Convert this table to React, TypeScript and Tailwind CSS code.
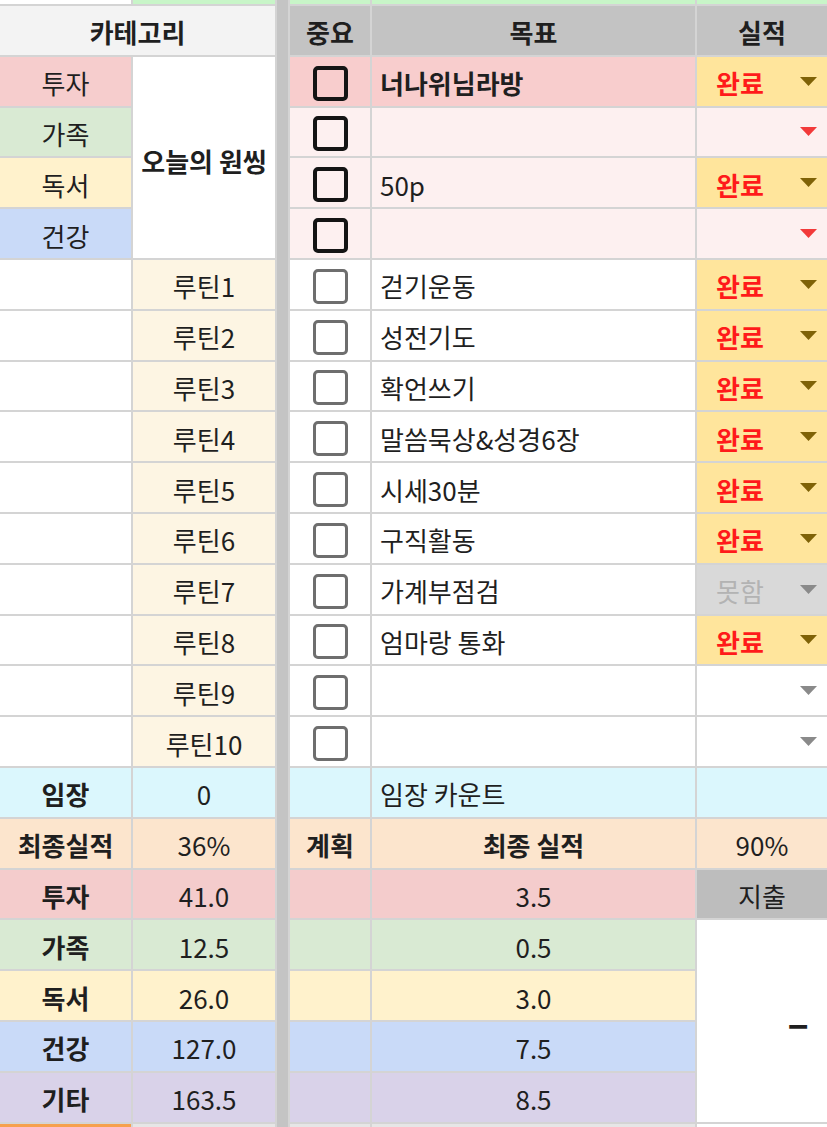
import { FC, ReactNode } from "react";
import clsx from "clsx";
import { twMerge } from "tailwind-merge";

type Status = "done" | "fail" | "empty";

interface CellProps {
  className?: string;
  children?: ReactNode;
}

// one spreadsheet cell; text sits a little below the middle like in Sheets
const Cell: FC<CellProps> = ({ className, children }) => (
  <div
    className={twMerge(
      "flex items-center justify-center pt-2 text-[26px] leading-none text-[#1f1f1f]",
      className
    )}
  >
    {children}
  </div>
);

const Arrow: FC<{ color: string }> = ({ color }) => (
  <svg width="17" height="9" viewBox="0 0 17 9" className="mb-2 shrink-0">
    <polygon points="0,0 17,0 8.5,9" fill={color} />
  </svg>
);

const Checkbox: FC<{ strong?: boolean }> = ({ strong }) => (
  <div
    className={clsx(
      "mt-1 h-[35px] w-[35px] rounded-[5px]",
      strong ? "border-[4px] border-[#141414]" : "border-[3px] border-[#6e6e6e] bg-white"
    )}
  />
);

const StatusCell: FC<{ status: Status; bg?: string; arrow?: string }> = ({ status, bg, arrow }) => {
  if (status === "done") {
    return (
      <Cell className="justify-between bg-[#ffe59c] pl-[19px] pr-[10px]">
        <span className="mb-1 font-bold text-[#ff1a1a]">완료</span>
        <Arrow color="#7f6207" />
      </Cell>
    );
  }
  if (status === "fail") {
    return (
      <Cell className="justify-between bg-[#d9d9d9] pl-[19px] pr-[10px]">
        <span className="mb-1 text-[#b3b3b3]">못함</span>
        <Arrow color="#8a8a8a" />
      </Cell>
    );
  }
  return (
    <Cell className={clsx("justify-end pr-[10px]", bg)}>
      <Arrow color={arrow ?? "#8a8a8a"} />
    </Cell>
  );
};

const oneThing = [
  { cat: "투자", catBg: "bg-[#f6cdcd]", rowBg: "bg-[#f8cdcd]", goal: "너나위님라방", bold: true, status: "done" as Status },
  { cat: "가족", catBg: "bg-[#d9ead3]", rowBg: "bg-[#fdf0f0]", goal: "", bold: false, status: "empty" as Status },
  { cat: "독서", catBg: "bg-[#fff2cc]", rowBg: "bg-[#fdf0f0]", goal: "50p", bold: false, status: "done" as Status },
  { cat: "건강", catBg: "bg-[#c9daf8]", rowBg: "bg-[#fdf0f0]", goal: "", bold: false, status: "empty" as Status },
];

const routines: { goal: string; status: Status }[] = [
  { goal: "걷기운동", status: "done" },
  { goal: "성전기도", status: "done" },
  { goal: "확언쓰기", status: "done" },
  { goal: "말씀묵상&성경6장", status: "done" },
  { goal: "시세30분", status: "done" },
  { goal: "구직활동", status: "done" },
  { goal: "가계부점검", status: "fail" },
  { goal: "엄마랑 통화", status: "done" },
  { goal: "", status: "empty" },
  { goal: "", status: "empty" },
];

const summary = [
  { cat: "투자", bg: "bg-[#f4cccc]", plan: "41.0", actual: "3.5" },
  { cat: "가족", bg: "bg-[#d9ead3]", plan: "12.5", actual: "0.5" },
  { cat: "독서", bg: "bg-[#fff2cc]", plan: "26.0", actual: "3.0" },
  { cat: "건강", bg: "bg-[#c9daf8]", plan: "127.0", actual: "7.5" },
  { cat: "기타", bg: "bg-[#d9d2e9]", plan: "163.5", actual: "8.5" },
];

const App: FC = () => {
  return (
    <div className="min-h-screen overflow-hidden bg-white font-['Noto_Sans_CJK_KR','Noto_Sans',sans-serif]">
      <div className="grid grid-cols-[131px_142px_11px_80px_323px_130px] grid-rows-[4px_repeat(22,48.8px)_3px] gap-[2px] bg-[#d4d4d4]">
        {/* divider column between the two blocks */}
        <div className="col-start-3 row-span-24 row-start-1 bg-[#c4c4c4]" />

        {/* top sliver of the previous row */}
        <div className="bg-white" />
        <div className="bg-[#c8f5c8]" />
        <div className="bg-[#c8f5c8]" />
        <div className="bg-[#c8f5c8]" />
        <div className="bg-[#c8f5c8]" />

        {/* header */}
        <Cell className="col-span-2 bg-[#f3f3f3] font-bold">
          <span className="mb-1">카테고리</span>
        </Cell>
        <Cell className="bg-[#c3c3c3] font-bold">
          <span className="mb-1">중요</span>
        </Cell>
        <Cell className="bg-[#c3c3c3] font-bold">
          <span className="mb-1">목표</span>
        </Cell>
        <Cell className="bg-[#c3c3c3] font-bold">
          <span className="mb-1">실적</span>
        </Cell>

        {/* one thing */}
        {oneThing.map((r, i) => (
          <div key={r.cat} className="contents">
            <Cell className={r.catBg}>
              <span className="mb-1">{r.cat}</span>
            </Cell>
            {i === 0 && <Cell className="row-span-4 bg-white font-bold">오늘의 원씽</Cell>}
            <Cell className={clsx(r.rowBg, "pt-0")}>
              <Checkbox strong />
            </Cell>
            <Cell className={clsx(r.rowBg, "justify-start pl-2", r.bold && "font-bold")}>
              <span className="mb-1">{r.goal}</span>
            </Cell>
            <StatusCell status={r.status} bg={r.rowBg} arrow="#f23a3a" />
          </div>
        ))}

        {/* routines */}
        {routines.map((r, i) => (
          <div key={i} className="contents">
            <Cell className="bg-white" />
            <Cell className="bg-[#fdf5e3]">
              <span className="mb-1">루틴{i + 1}</span>
            </Cell>
            <Cell className="bg-white pt-0">
              <Checkbox />
            </Cell>
            <Cell className="justify-start bg-white pl-2">
              <span className="mb-1">{r.goal}</span>
            </Cell>
            <StatusCell status={r.status} bg="bg-white" />
          </div>
        ))}

        {/* site visit counter */}
        <Cell className="bg-[#dbf7fd] font-bold">
          <span className="mb-1">임장</span>
        </Cell>
        <Cell className="bg-[#dbf7fd]">
          <span className="mb-1">0</span>
        </Cell>
        <Cell className="bg-[#dbf7fd]" />
        <Cell className="justify-start bg-[#dbf7fd] pl-2">
          <span className="mb-1">임장 카운트</span>
        </Cell>
        <Cell className="bg-[#dbf7fd]" />

        {/* totals */}
        <Cell className="bg-[#fce5cd] font-bold">
          <span className="mb-1">최종실적</span>
        </Cell>
        <Cell className="bg-[#fce5cd]">
          <span className="mb-1">36%</span>
        </Cell>
        <Cell className="bg-[#fce5cd] font-bold">
          <span className="mb-1">계획</span>
        </Cell>
        <Cell className="bg-[#fce5cd] font-bold">
          <span className="mb-1">최종 실적</span>
        </Cell>
        <Cell className="bg-[#fce5cd]">
          <span className="mb-1">90%</span>
        </Cell>

        {summary.map((r, i) => (
          <div key={r.cat} className="contents">
            <Cell className={clsx(r.bg, "font-bold")}>
              <span className="mb-1">{r.cat}</span>
            </Cell>
            <Cell className={r.bg}>
              <span className="mb-1">{r.plan}</span>
            </Cell>
            <Cell className={r.bg} />
            <Cell className={r.bg}>
              <span className="mb-1">{r.actual}</span>
            </Cell>
            {i === 0 && (
              <Cell className="bg-[#bdbdbd]">
                <span className="mb-1">지출</span>
              </Cell>
            )}
            {i === 1 && (
              <Cell className="row-span-4 justify-end bg-white pr-[18px]">
                <span className="mb-2 text-[40px] font-bold">–</span>
              </Cell>
            )}
          </div>
        ))}

        {/* bottom sliver of the next row */}
        <div className="bg-[#f6a04d]" />
        <div className="bg-[#e6e6e6]" />
        <div className="bg-[#e6e6e6]" />
        <div className="bg-[#e6e6e6]" />
        <div className="bg-white" />
      </div>
    </div>
  );
};

export default App;
